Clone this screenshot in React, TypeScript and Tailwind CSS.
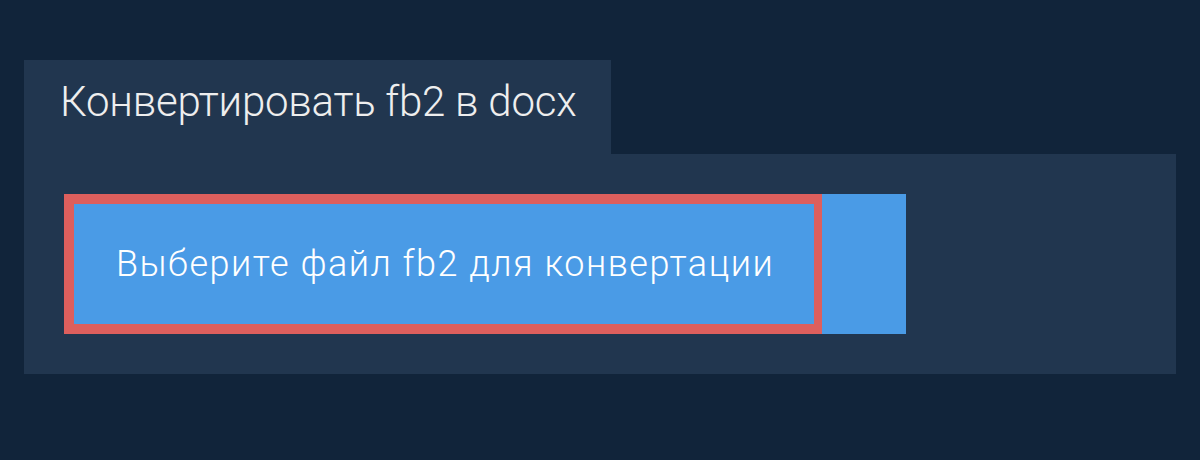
export default function App() {
  return (
    <div className="w-[1200px] h-[460px] bg-[#11243a] pt-[60px] px-[24px]" style={{ fontFamily: "Roboto, 'Noto Sans', sans-serif" }}>
      <div className="w-[587px] h-[94px] bg-[#21364f] pl-[36px] pt-[17px]">
        <h1 className="text-[42px] leading-[50px] font-light text-[#eeeeee] tracking-[-0.25px]">Конвертировать fb2 в docx</h1>
      </div>
      <div className="h-[220px] bg-[#21364f] p-[40px]">
        <div className="flex w-[842px] h-[140px] bg-[#4a9be6]">
          <div className="w-[758px] h-[140px] border-[10px] border-r-[8px] border-[#dd5f5d] flex items-center pl-[42px]">
            <span className="text-[36px] text-white font-light tracking-[1.5px]">Выберите файл fb2 для конвертации</span>
          </div>
        </div>
      </div>
    </div>
  );
}
